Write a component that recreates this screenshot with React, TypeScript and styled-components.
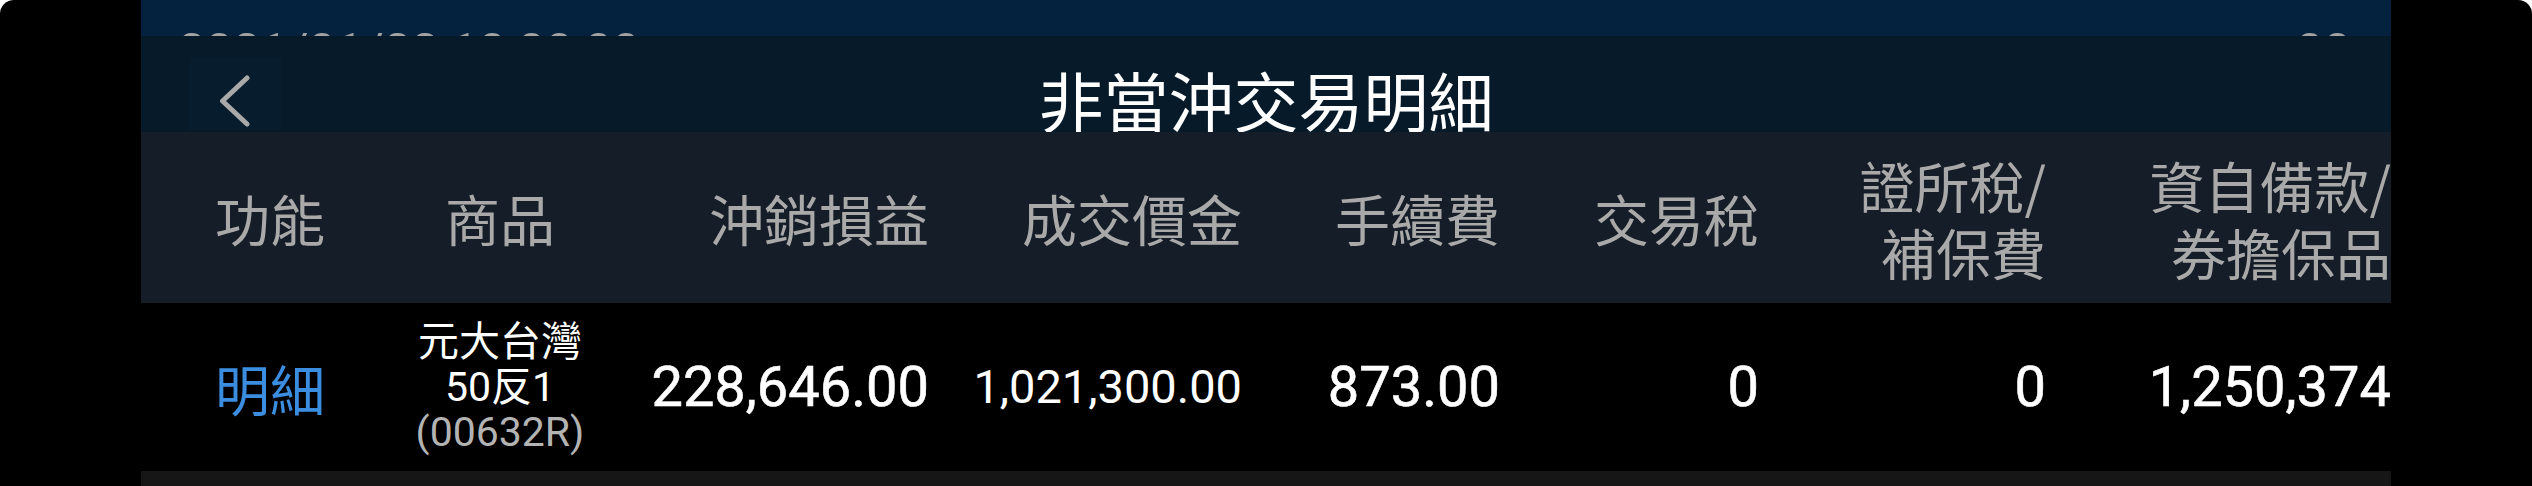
import React, { FC } from 'react';
import styled, { createGlobalStyle } from 'styled-components';

const GlobalStyle = createGlobalStyle`
    html, body {
        margin: 0;
        padding: 0;
        background: #ffffff;
    }
    * {
        box-sizing: border-box;
    }
`;

const CJK = `Roboto, "Noto Sans CJK TC", "Noto Sans", sans-serif`;
const CJK_FIRST = `"Noto Sans CJK TC", Roboto, sans-serif`;

const Frame = styled.div`
    width: 2532px;
    height: 486px;
    background: #000000;
    border-radius: 14px 14px 0 0;
    padding: 0 141px;
    overflow: hidden;
`;

const Screen = styled.div`
    width: 2250px;
    height: 486px;
    display: flex;
    flex-direction: column;
`;

// the page behind the dialog, only a sliver of it shows
const StatusBar = styled.div`
    height: 36px;
    flex: none;
    background: #04223e;
    overflow: hidden;
    display: flex;
    justify-content: space-between;
    padding: 26px 40px 0 37px;
    font-family: Roboto, sans-serif;
    font-size: 49px;
    line-height: 49px;
    color: #a3a3a3;
    white-space: nowrap;
`;

const Header = styled.div`
    height: 96px;
    flex: none;
    background: #061a2a;
    display: grid;
    grid-template-columns: 1fr auto 1fr;
    align-items: end;
`;

const BackButton = styled.div`
    width: 92px;
    height: 73px;
    margin: 0 0 2px 48px;
    padding-top: 15px;
    background: #071c2d;
    display: flex;
    align-items: center;
    justify-content: center;
`;

const Title = styled.h1`
    margin: 0;
    font-family: ${CJK_FIRST};
    font-weight: 400;
    font-size: 65px;
    line-height: 65px;
    color: #ffffff;
    white-space: nowrap;
`;

const columns = '258px 202px 328px 313px 258px 259px 287px 345px';

const HeadRow = styled.div`
    height: 171px;
    flex: none;
    background: #141d28;
    display: grid;
    grid-template-columns: ${columns};
    align-items: center;
`;

const HeadCell = styled.div<{ $center?: boolean }>`
    font-family: ${CJK_FIRST};
    font-size: 55px;
    line-height: 67px;
    color: #a9a9a9;
    text-align: ${(p) => (p.$center ? 'center' : 'right')};
    white-space: nowrap;
`;

const DataRow = styled.div`
    height: 168px;
    flex: none;
    background: #000000;
    display: grid;
    grid-template-columns: ${columns};
    align-items: center;
`;

const LinkCell = styled.div`
    font-family: ${CJK_FIRST};
    font-size: 55px;
    line-height: 67px;
    color: #3b8de0;
    text-align: center;
`;

const ProductCell = styled.div`
    font-family: ${CJK};
    font-size: 41px;
    line-height: 45px;
    text-align: center;
    color: #ffffff;
    white-space: nowrap;
`;

const ProductCode = styled.div`
    color: #b3b3b3;
`;

const NumCell = styled.div<{ $size?: number }>`
    font-family: Roboto, sans-serif;
    font-size: ${(p) => p.$size ?? 56}px;
    font-weight: 400;
    line-height: 66px;
    color: #ffffff;
    text-align: right;
    white-space: nowrap;
    -webkit-text-stroke: ${(p) => (p.$size ? '0' : '0.6px')} #ffffff;
`;

const BottomStrip = styled.div`
    flex: 1;
    background: #161616;
`;

const Chevron: FC = () => (
    <svg width="32" height="52" viewBox="0 0 32 52">
        <polyline
            points="28,3 3.5,26 28,49"
            fill="none"
            stroke="#a9a9a9"
            strokeWidth="5"
            strokeLinecap="round"
            strokeLinejoin="round"
        />
    </svg>
);

const App: FC = () => {
    return (
        <React.Fragment>
            <GlobalStyle />
            <Frame>
                <Screen>
                    <StatusBar>
                        <span>2021/01/22 10:00:00</span>
                        <span>00</span>
                    </StatusBar>
                    <Header>
                        <BackButton>
                            <Chevron />
                        </BackButton>
                        <Title>非當沖交易明細</Title>
                        <div />
                    </Header>
                    <HeadRow>
                        <HeadCell $center>功能</HeadCell>
                        <HeadCell $center>商品</HeadCell>
                        <HeadCell>沖銷損益</HeadCell>
                        <HeadCell>成交價金</HeadCell>
                        <HeadCell>手續費</HeadCell>
                        <HeadCell>交易稅</HeadCell>
                        <HeadCell>
                            證所稅/
                            <br />
                            補保費
                        </HeadCell>
                        <HeadCell>
                            資自備款/
                            <br />
                            券擔保品
                        </HeadCell>
                    </HeadRow>
                    <DataRow>
                        <LinkCell>明細</LinkCell>
                        <ProductCell>
                            <div>元大台灣</div>
                            <div>50反1</div>
                            <ProductCode>(00632R)</ProductCode>
                        </ProductCell>
                        <NumCell>228,646.00</NumCell>
                        <NumCell $size={47}>1,021,300.00</NumCell>
                        <NumCell>873.00</NumCell>
                        <NumCell>0</NumCell>
                        <NumCell>0</NumCell>
                        <NumCell>1,250,374</NumCell>
                    </DataRow>
                    <BottomStrip />
                </Screen>
            </Frame>
        </React.Fragment>
    );
};

export default App;
